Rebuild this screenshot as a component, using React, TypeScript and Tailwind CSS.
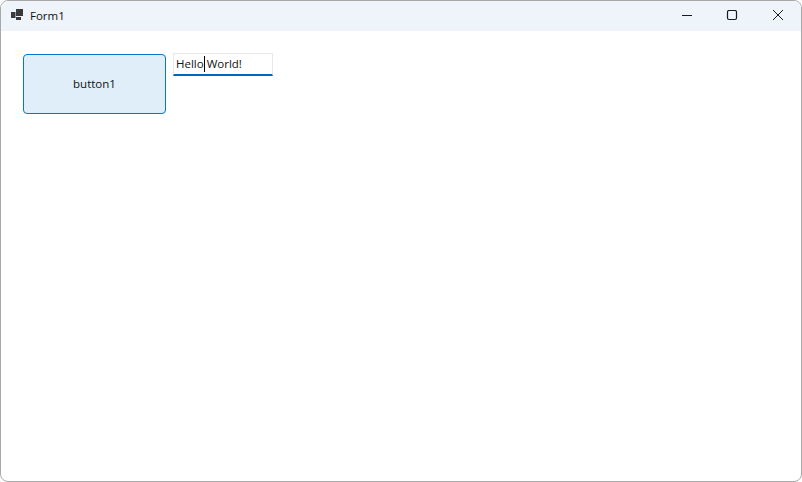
function TitleIcon() {
  return (
    <svg width="13" height="12" viewBox="0 0 13 12" className="mr-[6px] mb-[2px]">
      <rect x="0" y="3" width="4.5" height="6" fill="#3a3a3a" />
      <rect x="5" y="0" width="7" height="7" fill="#3a3a3a" />
      <rect x="5" y="8" width="5" height="3" fill="#3a3a3a" />
    </svg>
  );
}

function WindowButtons() {
  return (
    <div className="flex h-full">
      <div className="w-[46px] flex items-center justify-center">
        <svg width="12" height="12" viewBox="0 1 12 12">
          <path d="M2 6.5H12" stroke="#1a1a1a" strokeWidth="1" />
        </svg>
      </div>
      <div className="w-[46px] flex items-center justify-center">
        <svg width="12" height="12" viewBox="0 1 12 12">
          <rect x="1.5" y="1.5" width="9" height="9" rx="1.5" fill="none" stroke="#1a1a1a" strokeWidth="1.2" />
        </svg>
      </div>
      <div className="w-[46px] flex items-center justify-center">
        <svg width="12" height="12" viewBox="0 1 12 12">
          <path d="M1 1L11 11M11 1L1 11" stroke="#1a1a1a" strokeWidth="1" />
        </svg>
      </div>
    </div>
  );
}

export default function App() {
  return (
    <div className="w-[802px] h-[482px] bg-white font-['Open_Sans','Noto_Sans',sans-serif] text-[#111111]">
      <div className="w-full h-full flex flex-col border border-[#a9a9a9] rounded-[8px] overflow-hidden">
        {/* Title bar */}
        <div className="h-[30px] bg-[#eff3fa] flex items-center justify-between pl-[10px]">
          <div className="flex items-center text-[11.5px]">
            <TitleIcon />
            <span>Form1</span>
          </div>
          <WindowButtons />
        </div>

        {/* Form body */}
        <div className="flex-1 flex items-start pl-[22px] pt-[22px] gap-[7px]">
          <button className="mt-px w-[143px] h-[60px] bg-[#e0eef9] border border-[#0078d4] rounded-[4px] text-[11.5px] flex items-center justify-center">
            button1
          </button>
          <div className="w-[100px] h-[23px] flex items-center pl-[2px] border border-[#e8e8e8] border-b-2 border-b-[#0067c0] text-[11.5px] whitespace-pre">
            <span>Hello</span>
            <span className="w-px h-[16px] bg-black mr-[-1px]" />
            <span> World!</span>
          </div>
        </div>
      </div>
    </div>
  );
}
